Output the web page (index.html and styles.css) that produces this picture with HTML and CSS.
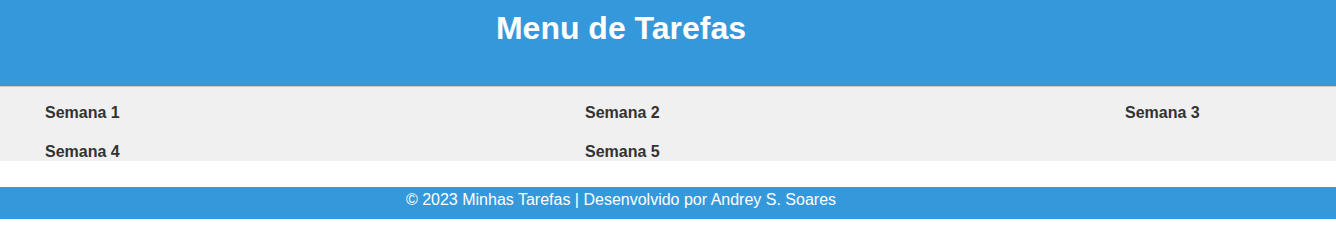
FILE: index.html
```html
<!DOCTYPE html>
<html lang="pt-BR">
<head>
<meta charset="utf-8">
<title>Menu de Tarefas</title>
<link rel="stylesheet" href="styles.css">
</head>
<body>
<header class="site-header">
  <div class="header-inner">
    <h1 class="title">Menu de Tarefas</h1>
  </div>
</header>
<nav class="weeks">
  <ul class="week-list">
    <li class="week">Semana 1</li>
    <li class="week">Semana 2</li>
    <li class="week">Semana 3</li>
    <li class="week">Semana 4</li>
    <li class="week">Semana 5</li>
  </ul>
</nav>
<main class="content"></main>
<footer class="site-footer">
  <div class="footer-inner">&copy; 2023 Minhas Tarefas | Desenvolvido por Andrey S. Soares</div>
</footer>
</body>
</html>
```
FILE: styles.css
```css
html, body {
  margin: 0;
  padding: 0;
  background: #ffffff;
  font-family: "Liberation Sans", Arial, sans-serif;
}

.site-header {
  background: #3598db;
  color: #ffffff;
  padding: 10px 0 39px;
  border-bottom: 1px solid #c8c8c8;
}

.header-inner {
  max-width: 1242px;
  text-align: center;
}

.title {
  margin: 0;
  font-size: 32px;
  line-height: 37px;
  font-weight: bold;
}

.weeks {
  background: #f0f0f0;
  padding: 17px 0 0 45px;
}

.week-list {
  list-style: none;
  margin: 0;
  padding: 0;
  display: grid;
  grid-template-columns: 540px 540px auto;
  row-gap: 21px;
}

.week {
  font-size: 16px;
  line-height: 18px;
  font-weight: bold;
  color: #333333;
}

.content {
  height: 26px;
}

.site-footer {
  background: #3598db;
  color: #ffffff;
  padding: 4px 0 10px;
}

.footer-inner {
  max-width: 1242px;
  text-align: center;
  font-size: 16px;
  line-height: 18px;
}
```
